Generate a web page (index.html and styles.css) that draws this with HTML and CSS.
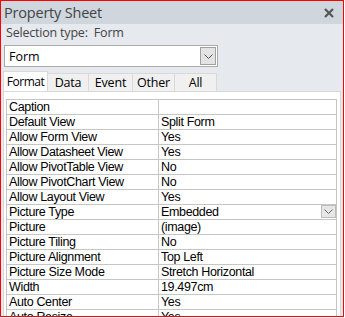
FILE: index.html
```html
<!DOCTYPE html>
<html lang="en">
<head>
    <meta charset="UTF-8">
    <title>Property Sheet</title>
    <link rel="stylesheet" href="styles.css">
</head>
<body>
    <div class="frame">
        <!-- Title bar -->
        <div class="titlebar">
            <span class="title">Property Sheet</span>
            <svg class="close" width="10" height="10" viewBox="0 0 10 10">
                <path d="M1 1 L9 9 M9 1 L1 9" stroke="#555" stroke-width="2.2" fill="none"/>
            </svg>
        </div>

        <div class="seltype">Selection type:&nbsp; Form</div>

        <!-- Object picker -->
        <div class="combo">
            <span class="combo-text">Form</span>
            <span class="combo-btn">
                <svg width="9" height="5" viewBox="0 0 9 5"><path d="M0.5 0.5 L4.5 4.5 L8.5 0.5" stroke="#555" fill="none"/></svg>
            </span>
        </div>

        <!-- Tabs -->
        <div class="tabs">
            <div class="tab active">Format</div>
            <div class="tab">Data</div>
            <div class="tab">Event</div>
            <div class="tab">Other</div>
            <div class="tab">All</div>
        </div>

        <div class="panel">
            <table class="props">
                <tr><td>Caption</td><td></td></tr>
                <tr><td>Default View</td><td>Split Form</td></tr>
                <tr><td>Allow Form View</td><td>Yes</td></tr>
                <tr><td>Allow Datasheet View</td><td>Yes</td></tr>
                <tr><td>Allow PivotTable View</td><td>No</td></tr>
                <tr><td>Allow PivotChart View</td><td>No</td></tr>
                <tr><td>Allow Layout View</td><td>Yes</td></tr>
                <tr>
                    <td>Picture Type</td>
                    <td class="has-btn">Embedded
                        <span class="cell-btn">
                            <svg width="9" height="5" viewBox="0 0 9 5"><path d="M0.5 0.5 L4.5 4.5 L8.5 0.5" stroke="#666" fill="none"/></svg>
                        </span>
                    </td>
                </tr>
                <tr><td>Picture</td><td>(image)</td></tr>
                <tr><td>Picture Tiling</td><td>No</td></tr>
                <tr><td>Picture Alignment</td><td>Top Left</td></tr>
                <tr><td>Picture Size Mode</td><td>Stretch Horizontal</td></tr>
                <tr><td>Width</td><td>19.497cm</td></tr>
                <tr><td>Auto Center</td><td>Yes</td></tr>
                <tr><td>Auto Resize</td><td>Yes</td></tr>
            </table>
        </div>
    </div>
</body>
</html>
```

FILE: styles.css
```css
body {
    margin: 0;
    background: #ffffff;
    font-family: "Open Sans", "Liberation Sans", sans-serif;
}
.frame {
    width: 344px;
    height: 317px;
    box-sizing: border-box;
    border: 1px solid #ff0000;
    background: #e6e9ee;
    overflow: hidden;
}
.titlebar {
    height: 23px;
    background: #cfd6de;
    display: flex;
    align-items: center;
    justify-content: space-between;
    padding: 0 9px 0 3px;
}
.title {
    font-size: 14.5px;
    color: #444;
    letter-spacing: -0.2px;
}
.close {
    display: block;
}
.seltype {
    height: 21px;
    line-height: 17px;
    padding-left: 5px;
    font-size: 12.5px;
    color: #444;
    letter-spacing: -0.2px;
}
.combo {
    margin-left: 3px;
    width: 214px;
    height: 22px;
    box-sizing: border-box;
    border: 1px solid #ababab;
    background: #fff;
    display: flex;
    align-items: center;
    justify-content: space-between;
    padding: 1px;
}
.combo-text {
    font-size: 12.5px;
    padding-left: 3px;
    color: #000;
}
.combo-btn {
    width: 16px;
    height: 18px;
    box-sizing: border-box;
    border: 1px solid #a0a0a0;
    background: #e3e3e3;
    display: flex;
    align-items: center;
    justify-content: center;
}
.tabs {
    display: flex;
    align-items: flex-end;
    margin-top: 4px;
    padding-left: 2px;
    height: 20px;
}
.tab {
    height: 18px;
    box-sizing: border-box;
    border: 1px solid #d9d9d9;
    border-bottom: none;
    border-left: none;
    background: #f0f0f0;
    font-size: 12.5px;
    letter-spacing: -0.2px;
    line-height: 17px;
    text-align: center;
    color: #000;
}
.tab:nth-child(2) { width: 41px; }
.tab:nth-child(3) { width: 44px; }
.tab:nth-child(4) { width: 42px; }
.tab:nth-child(5) { width: 42px; }
.tab.active {
    width: 45px;
    height: 20px;
    background: #fff;
    border-left: 1px solid #d9d9d9;
    font-size: 12px;
    line-height: 19px;
    letter-spacing: -0.5px;
}
.panel {
    margin-left: 2px;
    width: 338px;
    height: 230px;
    box-sizing: border-box;
    border: 1px solid #d9d9d9;
    background: #fff;
    padding: 7px 0 0 2px;
}
.props {
    width: 331px;
    border-collapse: collapse;
    table-layout: fixed;
}
.props td {
    height: 14px;
    padding: 0 0 0 2px;
    border: 1px solid #c6c6c6;
    font-family: "Liberation Sans", Arial, sans-serif;
    font-size: 12.5px;
    letter-spacing: -0.35px;
    line-height: 14px;
    color: #000;
    white-space: nowrap;
    overflow: hidden;
}
.props td:first-child {
    width: 149px;
}
.has-btn {
    position: relative;
}
.cell-btn {
    position: absolute;
    right: 0;
    top: 0;
    width: 15px;
    height: 13px;
    box-sizing: border-box;
    border: 1px solid #bcbcbc;
    background: #e6e6e6;
    display: flex;
    align-items: center;
    justify-content: center;
}
```
